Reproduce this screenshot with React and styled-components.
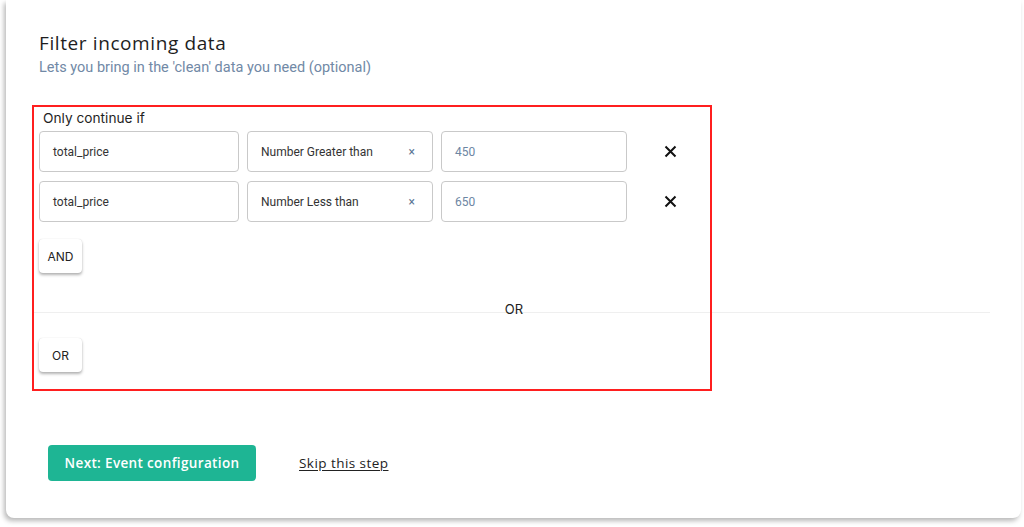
import React from "react";
import styled, { createGlobalStyle } from "styled-components";

const GlobalStyle = createGlobalStyle`
  html, body {
    margin: 0;
    padding: 0;
    background: #ffffff;
  }
  body {
    font-family: "Inter", "Roboto", sans-serif;
    color: #222;
  }
`;

const Page = styled.div`
  width: 1024px;
  height: 527px;
  overflow: hidden;
  background: #ffffff;
`;

const Card = styled.section`
  width: 1015px;
  height: 518px;
  margin-left: 6px;
  box-sizing: border-box;
  padding: 30px 0 0 33px;
  background: #fff;
  border-radius: 0 0 8px 8px;
  box-shadow: -2px 3px 5px rgba(0, 0, 0, 0.28);
`;

const Title = styled.h2`
  margin: 0;
  font-family: "Open Sans", sans-serif;
  font-weight: 400;
  font-size: 19px;
  letter-spacing: 0.6px;
  line-height: 26px;
  color: #1e1e1e;
`;

const Subtitle = styled.p`
  margin: 2px 0 0;
  font-family: "Roboto", sans-serif;
  font-size: 14.5px;
  line-height: 20px;
  color: #7189a6;
`;

/* red annotation frame: an outline, so it paints over the divider line */
const FilterBlock = styled.div`
  width: 680px;
  height: 286px;
  box-sizing: border-box;
  margin: 27px 0 0 -7px;
  outline: 2px solid #ff1f1f;
  outline-offset: -2px;
  padding: 4px 0 0 7px;
`;

const BlockLabel = styled.div`
  margin: 0 0 4px 4px;
  font-family: "Inter", sans-serif;
  font-size: 13.7px;
  line-height: 18px;
  color: #1f1f1f;
`;

const Rows = styled.div`
  display: flex;
  flex-direction: column;
  gap: 9px;
`;

const Row = styled.div`
  display: flex;
  align-items: center;
  gap: 8px;
`;

const Field = styled.div`
  width: ${(p) => p.$w}px;
  height: 41px;
  box-sizing: border-box;
  display: flex;
  align-items: center;
  justify-content: space-between;
  padding: 0 ${(p) => (p.$select ? 17 : 13)}px 0 13px;
  border: 1px solid #c9c9c9;
  border-radius: 4px;
  font-family: "Roboto", sans-serif;
  font-size: 12px;
  color: ${(p) => (p.$muted ? "#6d86a3" : "#333")};
`;

const ClearMark = styled.span`
  font-size: 12px;
  color: #5a7594;
  line-height: 1;
`;

const RemoveButton = styled.button`
  margin-left: 28px;
  width: 14px;
  height: 14px;
  padding: 0;
  border: none;
  background: none;
  display: flex;
  align-items: center;
  justify-content: center;
`;

const LogicButton = styled.button`
  width: 43px;
  height: 34px;
  padding: 0;
  margin-top: ${(p) => p.$top}px;
  border: none;
  border-radius: 4px;
  background: #fff;
  box-shadow: 0 2px 3px rgba(0, 0, 0, 0.3), 0 0 1px rgba(0, 0, 0, 0.15);
  font-family: "Inter", sans-serif;
  font-size: 12px;
  color: #222;
`;

const Divider = styled.div`
  width: 956px;
  height: 18px;
  margin: 27px 0 0 -5px;
  display: flex;
  justify-content: center;
  font-size: 13px;
  line-height: 18px;
  color: #222;
  background: linear-gradient(#efefef, #efefef) no-repeat 0 12px / 100% 1px;

  span {
    padding-left: 4px;
  }
`;

const Footer = styled.div`
  display: flex;
  align-items: center;
  gap: 43px;
  margin: 54px 0 0 9px;
`;

const NextButton = styled.button`
  width: 208px;
  height: 36px;
  border: none;
  border-radius: 4px;
  background: #1eb594;
  color: #fff;
  font-family: "Open Sans", sans-serif;
  font-weight: 600;
  font-size: 13.5px;
  letter-spacing: 0.35px;
`;

const SkipLink = styled.a`
  font-family: "Open Sans", sans-serif;
  font-size: 13.5px;
  letter-spacing: 0.45px;
  color: #222;
  text-decoration: underline;
  text-underline-offset: 2px;
`;

const conditions = [
  { field: "total_price", op: "Number Greater than", value: "450" },
  { field: "total_price", op: "Number Less than", value: "650" },
];

const CrossIcon = () => (
  <svg width="13" height="13" viewBox="0 0 13 13">
    <path d="M1.5 1.5 L11.5 11.5 M11.5 1.5 L1.5 11.5" stroke="#111" strokeWidth="2" />
  </svg>
);

const App = () => {
  return (
    <Page>
      <GlobalStyle />
      <Card>
        <Title>Filter incoming data</Title>
        <Subtitle>Lets you bring in the 'clean' data you need (optional)</Subtitle>
        <FilterBlock>
          <BlockLabel>Only continue if</BlockLabel>
          <Rows>
            {conditions.map((c, i) => (
              <Row key={i}>
                <Field $w={200}>{c.field}</Field>
                <Field $w={186} $select>
                  {c.op}
                  <ClearMark>×</ClearMark>
                </Field>
                <Field $w={186} $muted>
                  {c.value}
                </Field>
                <RemoveButton aria-label="remove">
                  <CrossIcon />
                </RemoveButton>
              </Row>
            ))}
          </Rows>
          <LogicButton $top={17}>AND</LogicButton>
          <Divider>
            <span>OR</span>
          </Divider>
          <LogicButton $top={20}>OR</LogicButton>
        </FilterBlock>
        <Footer>
          <NextButton>Next: Event configuration</NextButton>
          <SkipLink href="#">Skip this step</SkipLink>
        </Footer>
      </Card>
    </Page>
  );
};

export default App;
